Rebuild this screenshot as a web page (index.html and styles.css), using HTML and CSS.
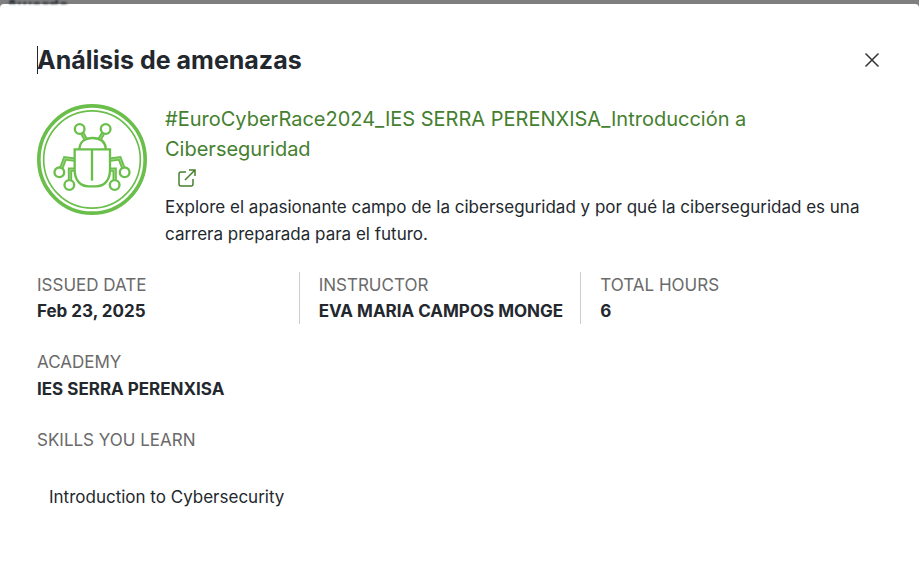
FILE: index.html
```html
<!DOCTYPE html>
<html lang="es">
<head>
  <meta charset="utf-8">
  <meta name="viewport" content="width=device-width, initial-scale=1">
  <title>Análisis de amenazas</title>
  <link rel="stylesheet" href="styles.css">
</head>
<body>
  <div class="page-behind" aria-hidden="true"><span>Awards</span></div>
  <main class="dialog" role="dialog" aria-labelledby="dialog-title">
    <header class="dialog-header">
      <h1 id="dialog-title">Análisis de amenazas</h1>
      <button class="close" type="button" aria-label="Close">
        <svg viewBox="0 0 14 14" width="14" height="14" fill="none" stroke="#333" stroke-width="1.5"><path d="M.5.5l13 13M13.500.5l-13 13"/></svg>
      </button>
    </header>

    <section class="award">
      <svg class="badge" viewBox="21 18 330 333" fill="none" stroke="#6abf4b">
        <ellipse cx="186" cy="184.500" rx="159.500" ry="161" stroke-width="11"/>
        <ellipse cx="186" cy="184.500" rx="145" ry="146" stroke-width="5"/>
        <g stroke-width="7">
          <circle cx="149" cy="93" r="14.500"/>
          <circle cx="227" cy="93" r="14.500"/>
          <circle cx="88" cy="223" r="14.500"/>
          <circle cx="284" cy="223" r="14.500"/>
          <circle cx="118" cy="261" r="14.500"/>
          <circle cx="254" cy="261" r="14.500"/>
          <path d="M148 154c1-22 17-34 40-34s38 12 40 34"/>
          <path d="M134 154h106v61c0 33-18 50-42 50h-22c-24 0-42-17-42-50z"/>
          <path d="M186 154v94"/>
        </g>
        <path stroke-width="13" d="M157 106l10 18M219 106l-10 18M134 185l-29-4-11 29M240 185l29-4 11 29M134 215h-14v32M240 215h14v32"/>
        <path stroke="#b5dea5" stroke-width="2" d="M158 108l8 15M218 108l-8 15M131 185l-26-4-10 27M243 185l26-4 10 27M131 215h-11v30M243 215h11v30"/>
      </svg>
      <div class="award-text">
        <a class="course" href="#">#EuroCyberRace2024_IES SERRA PERENXISA_Introducción a Ciberseguridad
          <svg class="external" viewBox="0 0 18 18" width="18" height="18" fill="none" stroke="currentColor" stroke-width="1.500"><path d="M8 3H3Q1 3 1 5v10q0 2 2 2h10q2 0 2-2v-5M11 1h6v6M17 1L7 11"/></svg>
        </a>
        <p>Explore el apasionante campo de la ciberseguridad y por qué la ciberseguridad es una carrera preparada para el futuro.</p>
      </div>
    </section>

    <dl class="facts">
      <div><dt>ISSUED DATE</dt><dd>Feb 23, 2025</dd></div>
      <div><dt>INSTRUCTOR</dt><dd>EVA MARIA CAMPOS MONGE</dd></div>
      <div><dt>TOTAL HOURS</dt><dd>6</dd></div>
    </dl>
    <dl class="academy">
      <dt>ACADEMY</dt><dd>IES SERRA PERENXISA</dd>
    </dl>
    <section class="skills">
      <h2>SKILLS YOU LEARN</h2>
      <ul><li>Introduction to Cybersecurity</li></ul>
    </section>
  </main>
</body>
</html>
```
FILE: styles.css
```css
* {
  box-sizing: border-box;
}

body {
  margin: 0;
  min-height: 100vh;
  display: flex;
  flex-direction: column;
  background: #7f7f7f;
  color: #23282e;
  font: 400 17px/27px Inter, "Liberation Sans", sans-serif;
}

h1, h2, p, dl, dd, ul {
  margin: 0;
  padding: 0;
}

.page-behind {
  height: 4px;
  padding-left: 6px;
  overflow: hidden;
  color: #23282e;
  font-size: 17px;
  font-weight: 700;
  line-height: 12px;
  filter: blur(1px);
}

.dialog {
  flex: 1;
  padding: 42px 37px 40px;
  background: #fff;
  border-radius: 4px 4px 0 0;
}

.dialog-header {
  display: flex;
  justify-content: space-between;
  align-items: center;
}

h1 {
  font-size: 25px;
  line-height: 28px;
  font-weight: 700;
  box-shadow: inset 1px 0 #23282e;
}

.close {
  width: 20px;
  height: 20px;
  padding: 0;
  border: 0;
  background: none;
  display: grid;
  place-items: center;
}

.award {
  margin-top: 30px;
  display: flex;
  gap: 18px;
}

.badge {
  flex: none;
  width: 110px;
  height: 111px;
}

.course {
  display: block;
  color: #44802f;
  font-size: 20px;
  line-height: 30px;
  text-decoration: none;
}

.external {
  display: block;
  margin: 5px 0 7px 13px;
}

.facts {
  margin: 24px 20px 0 -20px;
  display: grid;
  grid-template-columns: repeat(3, 1fr);
}

.facts > div {
  padding-left: 20px;
}

.facts > div + div {
  padding-left: 19px;
  border-left: 1px solid #ccc;
}

dt, h2 {
  color: #6a6a6a;
  font-size: 17px;
  font-weight: 400;
  line-height: 26px;
}

dd {
  font-weight: 700;
  line-height: 26px;
  white-space: nowrap;
}

.academy,
.skills {
  margin-top: 25px;
}

.academy dt {
  line-height: 27px;
}

.skills ul {
  margin-top: 31px;
  padding-left: 12px;
  list-style: none;
}
```
